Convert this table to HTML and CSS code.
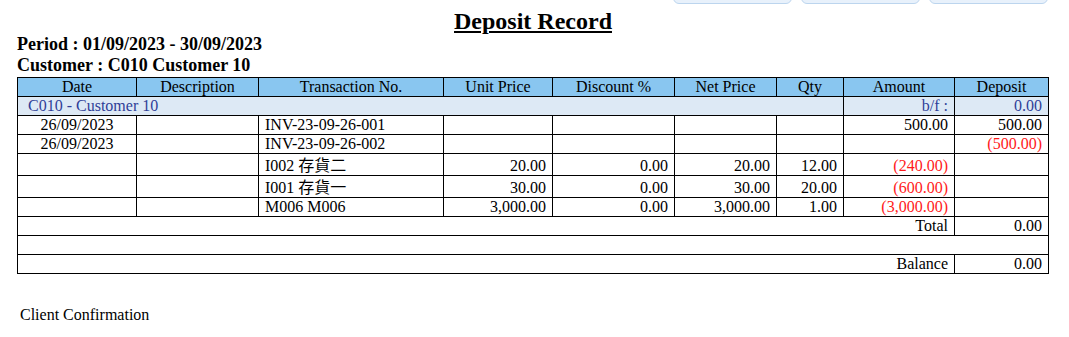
FILE: index.html
```html
<!DOCTYPE html>
<html>
<head>
<meta charset="utf-8">
<title>Deposit Record</title>
<link rel="stylesheet" href="styles.css">
</head>
<body>
<div class="page">
  <div class="toolbar">
    <button class="tool-btn" type="button"></button>
    <button class="tool-btn" type="button"></button>
    <button class="tool-btn" type="button"></button>
  </div>
  <h1 class="title">Deposit Record</h1>
  <div class="meta">Period : 01/09/2023 - 30/09/2023</div>
  <div class="meta">Customer : C010 Customer 10</div>
  <table class="record">
    <colgroup>
      <col class="c-date"><col class="c-desc"><col class="c-trans"><col class="c-unit"><col class="c-disc"><col class="c-net"><col class="c-qty"><col class="c-amt"><col class="c-dep">
    </colgroup>
    <thead>
      <tr class="head">
        <th>Date</th><th>Description</th><th>Transaction No.</th><th>Unit Price</th><th>Discount %</th><th>Net Price</th><th>Qty</th><th>Amount</th><th>Deposit</th>
      </tr>
    </thead>
    <tbody>
      <tr class="group">
        <td colspan="7" class="group-name">C010 - Customer 10</td>
        <td class="num">b/f :</td>
        <td class="num">0.00</td>
      </tr>
      <tr>
        <td class="center">26/09/2023</td><td></td><td class="left">INV-23-09-26-001</td><td></td><td></td><td></td><td></td><td class="num">500.00</td><td class="num">500.00</td>
      </tr>
      <tr>
        <td class="center">26/09/2023</td><td></td><td class="left">INV-23-09-26-002</td><td></td><td></td><td></td><td></td><td></td><td class="num neg">(500.00)</td>
      </tr>
      <tr class="tall">
        <td></td><td></td><td class="left">I002 存貨二</td><td class="num">20.00</td><td class="num">0.00</td><td class="num">20.00</td><td class="num">12.00</td><td class="num neg">(240.00)</td><td></td>
      </tr>
      <tr class="tall">
        <td></td><td></td><td class="left">I001 存貨一</td><td class="num">30.00</td><td class="num">0.00</td><td class="num">30.00</td><td class="num">20.00</td><td class="num neg">(600.00)</td><td></td>
      </tr>
      <tr>
        <td></td><td></td><td class="left">M006 M006</td><td class="num">3,000.00</td><td class="num">0.00</td><td class="num">3,000.00</td><td class="num">1.00</td><td class="num neg">(3,000.00)</td><td></td>
      </tr>
      <tr>
        <td colspan="8" class="num">Total</td><td class="num">0.00</td>
      </tr>
      <tr>
        <td colspan="9"></td>
      </tr>
      <tr>
        <td colspan="8" class="num">Balance</td><td class="num">0.00</td>
      </tr>
    </tbody>
  </table>
  <div class="confirm">Client Confirmation</div>
</div>
</body>
</html>
```

FILE: styles.css
```css
html, body {
  margin: 0;
  padding: 0;
  background: #ffffff;
}

body {
  font-family: "Liberation Serif", "Noto Sans CJK TC", serif;
  font-size: 16px;
  color: #000000;
}

.page {
  width: 1032px;
  padding-left: 17px;
}

.toolbar {
  display: flex;
  justify-content: flex-end;
  align-items: flex-end;
  gap: 9px;
  height: 4px;
  overflow: hidden;
  padding-right: 1px;
}

.tool-btn {
  flex: none;
  width: 119px;
  height: 30px;
  margin: 0;
  padding: 0;
  border: 1px solid #bcd5ee;
  border-radius: 6px;
  background: #e8f1fb;
}

.title {
  margin: 4px 0 0 0;
  font-size: 24px;
  line-height: 26px;
  font-weight: bold;
  text-align: center;
  text-decoration: underline;
}

.meta {
  font-size: 18px;
  line-height: 21px;
  font-weight: bold;
}

.record {
  margin-top: 1px;
  width: 1032px;
  table-layout: fixed;
  border-collapse: collapse;
  font-size: 16px;
}

.c-date { width: 119px; }
.c-desc { width: 122px; }
.c-trans { width: 185px; }
.c-unit { width: 109px; }
.c-disc { width: 122px; }
.c-net { width: 102px; }
.c-qty { width: 67px; }
.c-amt { width: 111px; }
.c-dep { width: 94px; }

.record th,
.record td {
  border: 1px solid #000000;
  padding: 0;
  height: 18px;
  line-height: 18px;
  white-space: nowrap;
  overflow: hidden;
}

.record th {
  font-weight: normal;
  text-align: center;
  background: #89c6f0;
}

.record .group td {
  background: #dde9f5;
  color: #2f3f98;
}

.record .group-name {
  padding-left: 10px;
  text-align: left;
}

.record .num {
  text-align: right;
  padding-right: 6px;
}

.record .center {
  text-align: center;
}

.record .left {
  text-align: left;
  padding-left: 6px;
}

.record .neg {
  color: #ff1a1a;
}

.record .tall td {
  height: 21px;
  vertical-align: bottom;
}

.confirm {
  margin-top: 32px;
  padding-left: 3px;
  line-height: 18px;
}
```
